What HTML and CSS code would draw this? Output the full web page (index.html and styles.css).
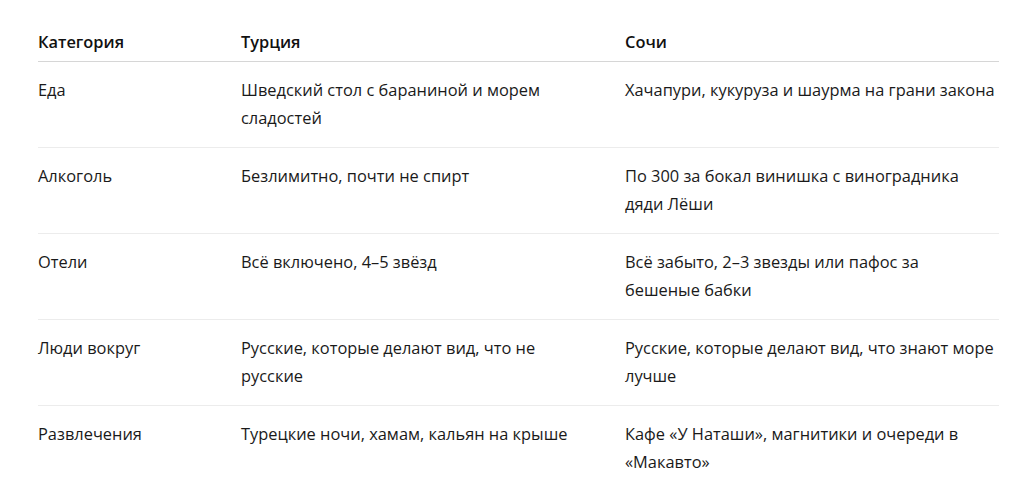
FILE: index.html
```html
<!DOCTYPE html>
<html lang="ru">
<head>
<meta charset="utf-8">
<title>Турция vs Сочи</title>
<link rel="stylesheet" href="styles.css">
</head>
<body>
<div class="wrap">
<table class="cmp">
<colgroup><col class="c1"><col class="c2"><col class="c3"></colgroup>
<thead>
<tr><th>Категория</th><th>Турция</th><th>Сочи</th></tr>
</thead>
<tbody>
<tr><td>Еда</td><td>Шведский стол с бараниной и морем сладостей</td><td>Хачапури, кукуруза и шаурма на грани закона</td></tr>
<tr><td>Алкоголь</td><td>Безлимитно, почти не спирт</td><td>По 300 за бокал винишка с виноградника дяди&nbsp;Лёши</td></tr>
<tr><td>Отели</td><td>Всё включено, 4–5 звёзд</td><td>Всё забыто, 2–3 звезды или пафос за бешеные&nbsp;бабки</td></tr>
<tr><td>Люди вокруг</td><td>Русские, которые делают вид, что не русские</td><td>Русские, которые делают вид, что знают море лучше</td></tr>
<tr><td>Развлечения</td><td>Турецкие ночи, хамам, кальян на крыше</td><td>Кафе «У Наташи», магнитики и очереди в «Макавто»</td></tr>
</tbody>
</table>
</div>
</body>
</html>
```
FILE: styles.css
```css
html, body { margin: 0; padding: 0; background: #fff; }
body {
  font-family: "Open Sans", "Noto Sans", sans-serif;
  font-size: 16.4px;
  color: #1a1a1a;
}
.wrap { padding: 28px 25px 0 38px; }
.cmp { width: 961px; border-collapse: collapse; table-layout: fixed; }
.c1 { width: 203px; }
.c2 { width: 384px; }
.c3 { width: 374px; }
.cmp th {
  text-align: left;
  font-weight: 600;
  color: #111;
  line-height: 28.5px;
  padding: 0 30px 4px 0;
  border-bottom: 1px solid #d6d6d6;
}
.cmp td {
  vertical-align: top;
  line-height: 28.5px;
  padding: 14px 30px 14px 0;
  border-bottom: 1px solid #ececec;
}
.cmp th:last-child, .cmp td:last-child { padding-right: 0; }
```
